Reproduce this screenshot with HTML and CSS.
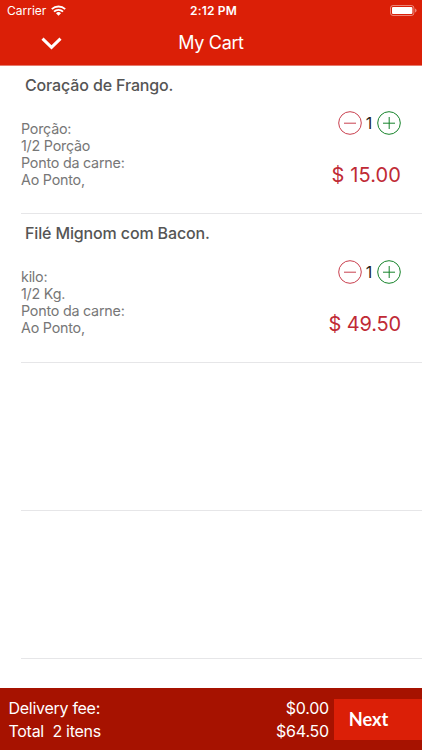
FILE: index.html
```html
<!DOCTYPE html>
<html lang="en">
<head>
<meta charset="utf-8">
<title>My Cart</title>
<link rel="stylesheet" href="styles.css">
</head>
<body>
<header class="top">
  <div class="status">
    <span class="carrier"><span class="t-carrier">Carrier</span>
      <svg class="wifi" width="15" height="11" viewBox="0 0 15 11"><g fill="none" stroke="#fff" stroke-width="1.8"><path d="M.8 4.2a9.6 9.6 0 0 1 13.4 0"/><path d="M3 6.7a6.4 6.4 0 0 1 9 0"/></g><path d="M7.5 10.8 5 8.3a3.6 3.6 0 0 1 5 0z" fill="#fff"/></svg>
    </span>
    <span class="clock">2:12 PM</span>
    <svg class="battery" width="27" height="11" viewBox="0 0 27 11"><rect x=".5" y=".5" width="23.4" height="10" rx="2.5" fill="none" stroke="#fff" stroke-opacity=".45"/><rect x="2" y="2" width="20.4" height="7" rx="1" fill="#fff"/><path d="M25 3.6q1.6.5 1.6 1.9T25 7.4z" fill="#fff" fill-opacity=".45"/></svg>
  </div>
  <div class="nav">
    <svg class="chevron" width="22" height="13" viewBox="0 0 22 13"><path d="m1.5 1.6 9 8.7 9-8.7" fill="none" stroke="#fff" stroke-width="3"/></svg>
    <h1 class="title">My Cart</h1>
  </div>
</header>
<main class="list">
  <section class="item">
    <h2 class="name">Coração de Frango.</h2>
    <div class="row">
      <p class="desc">Porção:<br>1/2 Porção<br>Ponto da carne:<br>Ao Ponto,</p>
      <div class="side">
        <div class="stepper">
          <svg width="24" height="24" viewBox="0 0 24 24" fill="none" stroke="#c9404f"><circle cx="12" cy="12" r="11.3"/><path d="M6 12.2h12"/></svg>
          <span class="qty">1</span>
          <svg width="24" height="24" viewBox="0 0 24 24" fill="none" stroke="#16832a"><circle cx="12" cy="12" r="11.3"/><path d="M6 12.2h12M12.2 6v12"/></svg>
        </div>
        <div class="price price-first">$ 15.00</div>
      </div>
    </div>
  </section>
  <section class="item">
    <h2 class="name">Filé Mignom com Bacon.</h2>
    <div class="row">
      <p class="desc">kilo:<br>1/2 Kg.<br>Ponto da carne:<br>Ao Ponto,</p>
      <div class="side">
        <div class="stepper">
          <svg width="24" height="24" viewBox="0 0 24 24" fill="none" stroke="#c9404f"><circle cx="12" cy="12" r="11.3"/><path d="M6 12.2h12"/></svg>
          <span class="qty">1</span>
          <svg width="24" height="24" viewBox="0 0 24 24" fill="none" stroke="#16832a"><circle cx="12" cy="12" r="11.3"/><path d="M6 12.2h12M12.2 6v12"/></svg>
        </div>
        <div class="price">$ 49.50</div>
      </div>
    </div>
  </section>
  <section class="item"></section>
  <section class="item"></section>
</main>
<footer class="bottom">
  <div class="totals">
    <div class="line"><span>Delivery fee:</span><span class="amount">$0.00</span></div>
    <div class="line"><span>Total&nbsp; 2 itens</span><span class="amount">$64.50</span></div>
  </div>
  <button class="next">Next</button>
</footer>
</body>
</html>
```
FILE: styles.css
```css
* { box-sizing: border-box; margin: 0; padding: 0; }
body { width: 422px; height: 750px; display: flex; flex-direction: column; background: #fff; font-family: Inter, "Liberation Sans", sans-serif; overflow: hidden; }
.top { height: 66px; background: #db1f07; color: #fff; border-bottom: 1px solid #e67a6c; }
.status { height: 21px; display: grid; grid-template-columns: 1fr auto 1fr; align-items: center; padding: 0 5px 0 7px; font-size: 12px; }
.carrier { display: flex; align-items: center; gap: 5px; }
.clock { font-weight: 600; letter-spacing: .2px; padding-left: 3px; }
.battery { justify-self: end; }
.nav { height: 44px; display: grid; grid-template-columns: 1fr auto 1fr; align-items: center; }
.chevron { margin-left: 40.5px; }
.title { font-size: 18px; font-weight: 400; line-height: 22px; letter-spacing: -.35px; }
.list { flex: 1; }
.item { height: 148.3px; margin-left: 20.5px; border-bottom: 1px solid #e6e6e8; padding-top: 8px; }
.name { font-size: 16px; font-weight: 500; line-height: 22px; letter-spacing: -.14px; color: #555; padding-left: 4.5px; }
.row { display: flex; justify-content: space-between; }
.desc { font-size: 14.3px; line-height: 17px; letter-spacing: -.22px; color: #777; padding: 24px 0 0 .5px; }
.side { padding: 15.3px 21px 0 0; display: flex; flex-direction: column; align-items: flex-end; }
.stepper { display: flex; align-items: center; }
.qty { width: 15px; padding-right: 1px; text-align: center; font-size: 16px; line-height: 24px; color: #222; }
.price { margin-top: 27px; font-size: 20px; line-height: 26px; letter-spacing: -.15px; color: #c02a35; }
.price-first { letter-spacing: .1px; }
.bottom { height: 62px; background: #a61200; color: #fff; display: flex; }
.totals { width: 334px; padding: 9px 5px 0 8.5px; font-size: 16px; line-height: 23px; letter-spacing: -.28px; }
.line { display: flex; justify-content: space-between; }
.amount { letter-spacing: -.2px; }
.next { flex: 1; height: 41px; margin-top: 10.5px; padding: 0 19px 0 0; border: 0; background: #db1f07; color: #fff; font: 700 18.2px Lato, sans-serif; }
```
